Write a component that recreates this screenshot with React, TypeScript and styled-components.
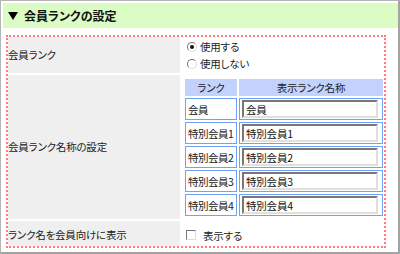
import { Fragment } from "react"
import styled, { createGlobalStyle } from "styled-components"

const GlobalStyle = createGlobalStyle`
    body {
        margin: 0;
        background: #fff;
        font-family: "Noto Sans CJK JP", "Noto Sans", sans-serif;
        font-feature-settings: "palt";
        color: #222;
    }
`

const Frame = styled.div`
    width: 400px;
    height: 254px;
    box-sizing: border-box;
    border-style: solid;
    border-color: #b4b4b4 #a4a4a4 #a4a4a4 #b4b4b4;
    border-width: 1px 2px 2px 1px;
    padding: 2px 0 0 2px;
    display: flex;
    flex-direction: column;
`

const Header = styled.div`
    height: 25px;
    background: #dcfcc6;
    display: flex;
    align-items: center;
    gap: 6px;
    padding-left: 5px;
    font-size: 12px;
    font-weight: bold;
    color: #111;
`

const Arrow = styled.span`
    width: 0;
    height: 0;
    border-left: 5px solid transparent;
    border-right: 5px solid transparent;
    border-top: 8px solid #000;
    margin-top: 1px;
`

const Body = styled.div`
    padding: 7px 12px 0 3px;
`

const Dotted = styled.div`
    border: 2px dotted #ff7a7a;
    display: grid;
    grid-template-columns: 172px 1fr;
    row-gap: 2px;
    font-size: 10.5px;
    letter-spacing: -0.2px;
`

const Label = styled.div<{ $shift?: number }>`
    background: #efefef;
    display: flex;
    align-items: center;
    padding-top: ${(p) => p.$shift ?? 0}px;
    padding-bottom: ${(p) => (p.$shift ? 0 : 2)}px;
`

const Value = styled.div<{ $pad: string }>`
    display: flex;
    flex-direction: column;
    padding: ${(p) => p.$pad};
`

const Choice = styled.label`
    display: flex;
    align-items: center;
    height: 17px;
    gap: 3px;
`

const Radio = styled.input`
    appearance: none;
    margin: 0 0 0 3px;
    width: 10px;
    height: 10px;
    border-radius: 50%;
    box-sizing: border-box;
    border: 1px solid;
    border-color: #777 #ddd #ddd #777;
    background: #fff;
    display: grid;
    place-items: center;
    &:checked::after {
        content: "";
        width: 4px;
        height: 4px;
        border-radius: 50%;
        background: #111;
    }
`

const RankTable = styled.div`
    display: grid;
    grid-template-columns: 52px 144px;
    grid-template-rows: 17px;
    grid-auto-rows: 22px;
    gap: 2px;
`

const HeadCell = styled.div`
    background: #c3d2fd;
    display: flex;
    align-items: center;
    justify-content: center;
`

const Cell = styled.div`
    border: 1px solid #6fa3f7;
    display: flex;
    align-items: center;
    padding: 0 2px;
    white-space: nowrap;
    overflow: hidden;
    letter-spacing: -0.5px;
`

const NameInput = styled.input`
    width: 136px;
    height: 18px;
    box-sizing: border-box;
    margin: 0;
    padding: 0 2px;
    border-style: solid;
    border-width: 2px;
    border-color: #777 #e2e0da #e2e0da #777;
    font-family: inherit;
    font-feature-settings: "palt";
    font-size: 10.5px;
    letter-spacing: -0.2px;
    color: #111;
`

const Check = styled.input`
    appearance: none;
    margin: 0 0 0 6px;
    width: 10px;
    height: 10px;
    box-sizing: border-box;
    border: 1px solid;
    border-color: #777 #ddd #ddd #777;
    background: #fff;
`

const CheckRow = styled.label`
    display: flex;
    align-items: center;
    gap: 7px;
    height: 25px;
    padding-top: 3px;
    box-sizing: border-box;
`

const ranks = ["会員", "特別会員1", "特別会員2", "特別会員3", "特別会員4"]

const App = () => {
    return (
        <Frame>
            <GlobalStyle />
            <Header>
                <Arrow />
                会員ランクの設定
            </Header>
            <Body>
                <Dotted>
                    <Label>会員ランク</Label>
                    <Value $pad="1px 0 1px 4px">
                        <Choice>
                            <Radio type="radio" name="use" defaultChecked />
                            使用する
                        </Choice>
                        <Choice>
                            <Radio type="radio" name="use" />
                            使用しない
                        </Choice>
                    </Value>

                    <Label>会員ランク名称の設定</Label>
                    <Value $pad="4px 0 3px 5px">
                        <RankTable>
                            <HeadCell>ランク</HeadCell>
                            <HeadCell>表示ランク名称</HeadCell>
                            {ranks.map((r) => (
                                <Fragment key={r}>
                                    <Cell>{r}</Cell>
                                    <Cell>
                                        <NameInput defaultValue={r} />
                                    </Cell>
                                </Fragment>
                            ))}
                        </RankTable>
                    </Value>

                    <Label $shift={2}>ランク名を会員向けに表示</Label>
                    <Value $pad="0">
                        <CheckRow>
                            <Check type="checkbox" />
                            表示する
                        </CheckRow>
                    </Value>
                </Dotted>
            </Body>
        </Frame>
    )
}

export default App
